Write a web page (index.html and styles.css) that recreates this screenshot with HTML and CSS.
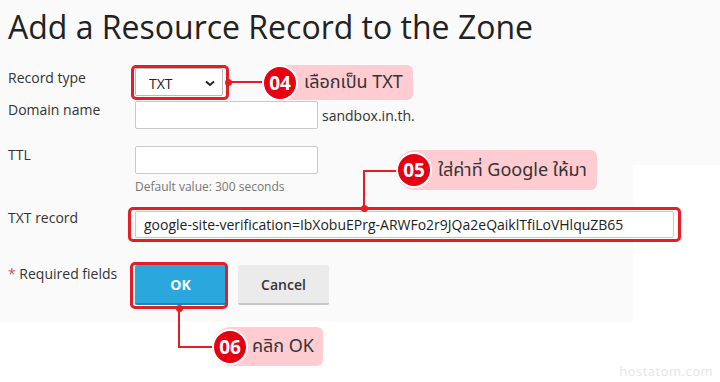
FILE: index.html
```html
<!doctype html>
<html lang="th">
  <head>
    <meta charset="UTF-8" />
    <meta name="viewport" content="width=device-width, initial-scale=1.0" />
    <title>Add a Resource Record to the Zone</title>
    <link rel="stylesheet" href="styles.css">
  </head>
  <body>
    <div class="panel">
      <h1>Add a Resource Record to the Zone</h1>

      <form class="record-form">
        <div class="row row-type">
          <label>Record type</label>
          <div class="field">
            <div class="select">
              <span>TXT</span>
              <svg width="10" height="7" viewBox="0 0 10 7"><path d="M1 1.5 L5 5 L9 1.5" fill="none" stroke="#222" stroke-width="2"/></svg>
            </div>
          </div>
        </div>

        <div class="row row-domain">
          <label>Domain name</label>
          <div class="field">
            <input class="text-input short" type="text">
            <span class="suffix">sandbox.in.th.</span>
          </div>
        </div>

        <div class="row row-ttl">
          <label>TTL</label>
          <div class="field field-stack">
            <input class="text-input short" type="text">
            <span class="hint">Default value: 300 seconds</span>
          </div>
        </div>

        <div class="row row-txt">
          <label>TXT record</label>
          <div class="field">
            <input class="text-input wide" type="text" value="google-site-verification=IbXobuEPrg-ARWFo2r9JQa2eQaiklTfiLoVHlquZB65">
          </div>
        </div>

        <div class="row row-buttons">
          <label><span class="req">*</span> Required fields</label>
          <div class="field buttons">
            <button type="button" class="btn btn-ok">OK</button>
            <button type="button" class="btn btn-cancel">Cancel</button>
          </div>
        </div>
      </form>

      <!-- step 04 -->
      <div class="mark mark-type"></div>
      <div class="dot dot-type"></div>
      <div class="wire wire-type"></div>
      <div class="callout callout-type"><span class="step">04</span><span class="note">เลือกเป็น TXT</span></div>

      <!-- step 05 -->
      <div class="mark mark-txt"></div>
      <div class="wire wire-txt-v"></div>
      <div class="wire wire-txt-h"></div>
      <div class="dot dot-txt"></div>
      <div class="callout callout-txt"><span class="step">05</span><span class="note">ใส่ค่าที่ Google ให้มา</span></div>

      <!-- step 06 -->
      <div class="mark mark-ok"></div>
      <div class="wire wire-ok-v"></div>
      <div class="wire wire-ok-h"></div>
      <div class="dot dot-ok"></div>
      <div class="callout callout-ok"><span class="step">06</span><span class="note">คลิก OK</span></div>
    </div>

    <div class="watermark">hostatom.com</div>
  </body>
</html>
```

FILE: styles.css
```css
body {
  margin: 0;
  font-family: "Open Sans", Arial, sans-serif;
  color: #333;
  background: #fff linear-gradient(#fafafa, #fafafa) no-repeat 0 0 / 100% 165px;
  height: 382px;
  position: relative;
  overflow: hidden;
}

.panel {
  position: relative;
  width: 633px;
  height: 322px;
  background: #fafafa;
  padding: 0 0 0 8px;
  box-sizing: border-box;
}

h1 {
  margin: 0;
  padding-top: 8px;
  height: 38px;
  font-size: 32px;
  font-weight: 400;
  line-height: 38px;
  color: #222;
  white-space: nowrap;
}

.record-form {
  margin-top: 22px;
}

.row {
  display: flex;
  align-items: flex-start;
}

.row label {
  width: 127px;
  flex: none;
  font-size: 14px;
  line-height: 20px;
  margin-top: -1px;
}

.field {
  display: flex;
  align-items: center;
}

.field-stack {
  flex-direction: column;
  align-items: flex-start;
}

.row-type { height: 28px; }
.row-domain { height: 28px; margin-top: 5px; }
.row-ttl { height: 49px; margin-top: 17px; }
.row-txt { height: 27px; margin-top: 16px; }
.row-buttons { height: 40px; margin-top: 27px; }

.row-type label { margin-top: 0; }
.row-txt label { margin-top: -3px; }

.select {
  width: 88px;
  height: 28px;
  box-sizing: border-box;
  border: 1px solid #b9b9b9;
  border-radius: 2px;
  background: #fff;
  display: flex;
  align-items: center;
  justify-content: space-between;
  padding: 2px 7px 0 13px;
  font-size: 14px;
  color: #222;
}

.text-input {
  height: 28px;
  box-sizing: border-box;
  border: 1px solid #c9c9c9;
  border-radius: 2px;
  background: #fff;
  font-family: "Open Sans", Arial, sans-serif;
  font-size: 14px;
  color: #222;
  padding: 0 8px;
  margin: 0;
}

.short { width: 183px; }
.wide { width: 539px; height: 27px; }

.suffix {
  font-size: 14px;
  margin-left: 4px;
}

.hint {
  font-size: 12px;
  line-height: 16px;
  color: #777;
  margin-top: 5px;
}

.req { color: #c4555b; }

.buttons { gap: 12px; }

.btn {
  height: 40px;
  width: 91px;
  border: none;
  border-radius: 2px;
  font-family: "Open Sans", Arial, sans-serif;
  font-size: 14px;
  padding: 0;
}

.btn-ok {
  background: #2aa8de;
  border-bottom: 2px solid #1f87b8;
  color: #fff;
  font-weight: 700;
}

.btn-cancel {
  background: #ebebeb;
  border-bottom: 2px solid #c6c6c6;
  color: #333;
  font-weight: 600;
}

/* annotations */
.mark {
  position: absolute;
  border: 3px solid #e41e26;
  border-radius: 5px;
  box-sizing: border-box;
}

.mark-type { left: 131px; top: 65px; width: 98px; height: 35px; }
.mark-txt { left: 128px; top: 207px; width: 553px; height: 35px; }
.mark-ok { left: 130px; top: 262px; width: 98px; height: 47px; }

.dot {
  position: absolute;
  width: 7px;
  height: 7px;
  border-radius: 50%;
  background: #e41e26;
}

.dot-type { left: 225px; top: 79px; }
.dot-txt { left: 361px; top: 205px; }
.dot-ok { left: 176px; top: 305px; }

.wire {
  position: absolute;
  background: #e41e26;
}

.wire-type { left: 228px; top: 81px; width: 40px; height: 2px; }
.wire-txt-v { left: 363px; top: 170px; width: 2px; height: 38px; }
.wire-txt-h { left: 363px; top: 170px; width: 40px; height: 2px; }
.wire-ok-v { left: 178px; top: 308px; width: 2px; height: 40px; }
.wire-ok-h { left: 178px; top: 346px; width: 40px; height: 2px; }

.callout {
  position: absolute;
  display: flex;
  align-items: center;
  background: #ffccd1;
  border-radius: 18px 6px 6px 18px;
}

.callout-type { left: 263px; top: 65px; width: 150px; height: 35px; }
.callout-txt { left: 397px; top: 150px; width: 200px; height: 40px; }
.callout-ok { left: 213px; top: 327px; width: 110px; height: 39px; }

.step {
  width: 36px;
  height: 36px;
  flex: none;
  box-sizing: border-box;
  border: 2px solid #fff;
  border-radius: 50%;
  background: #e60012;
  color: #fff;
  font-family: "Open Sans", Arial, sans-serif;
  font-weight: 700;
  font-size: 19px;
  display: flex;
  align-items: center;
  justify-content: center;
  margin-left: -1px;
}

.note {
  margin-left: 6px;
  font-family: "Noto Sans Thai", "Noto Sans", "Open Sans", sans-serif;
  font-size: 18px;
  font-weight: 400;
  color: #333;
  white-space: nowrap;
}

.callout-ok .note { margin-left: 4px; }

.watermark {
  position: absolute;
  right: 7px;
  bottom: 2px;
  font-size: 13px;
  color: #e6e6e6;
  letter-spacing: 0.5px;
}
```
